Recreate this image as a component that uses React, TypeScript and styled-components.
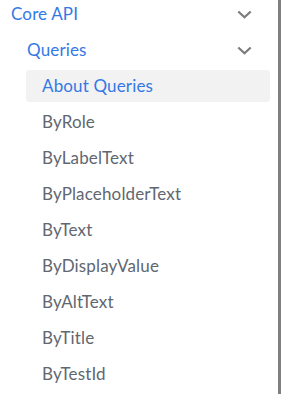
import React from "react";
import styled, { createGlobalStyle } from "styled-components";

interface MenuItem {
  label: string;
  active?: boolean;
  items?: MenuItem[];
}

const menu: MenuItem[] = [
  {
    label: "Core API",
    items: [
      {
        label: "Queries",
        items: [
          { label: "About Queries", active: true },
          { label: "ByRole" },
          { label: "ByLabelText" },
          { label: "ByPlaceholderText" },
          { label: "ByText" },
          { label: "ByDisplayValue" },
          { label: "ByAltText" },
          { label: "ByTitle" },
          { label: "ByTestId" },
        ],
      },
    ],
  },
];

const GlobalStyle = createGlobalStyle`
  html, body {
    margin: 0;
    padding: 0;
    background: #ffffff;
    overflow: hidden;
  }
  body {
    font-family: Lato, "Liberation Sans", sans-serif;
    -webkit-font-smoothing: antialiased;
  }
`;

const Chevron = () => (
  <svg width="15" height="9" viewBox="0 0 15 9" fill="none">
    <polyline points="1.3,1.5 7.5,7.2 13.7,1.5" stroke="#7b7b7b" strokeWidth="2.2" />
  </svg>
);

const MenuTree = ({ items, level }: { items: MenuItem[]; level: number }) => (
  <List $level={level}>
    {items.map((item) => (
      <li key={item.label}>
        <Row $level={level} $active={!!item.active} $category={!!item.items}>
          <span>{item.label}</span>
          {item.items ? <Chevron /> : null}
        </Row>
        {item.items ? <MenuTree items={item.items} level={level + 1} /> : null}
      </li>
    ))}
  </List>
);

const App = () => (
  <>
    <GlobalStyle />
    <Sidebar>
      <MenuTree items={menu} level={0} />
    </Sidebar>
  </>
);

const Sidebar = styled.nav`
  width: 278px;
  height: 100vh;
  border-right: 3px solid #7f7f7f;
  box-sizing: content-box;
  overflow: hidden;
`;

const List = styled.ul<{ $level: number }>`
  list-style: none;
  margin: ${(p) => (p.$level === 0 ? "-2px 0 0 0" : p.$level === 1 ? "4px 0 0 11px" : "4px 0 0 15px")};
  padding: 0;
  display: flex;
  flex-direction: column;
  gap: 4px;
`;

const Row = styled.div<{ $level: number; $active: boolean; $category: boolean }>`
  display: flex;
  align-items: center;
  justify-content: space-between;
  height: 32px;
  margin-right: 8px;
  padding: 0 18px 0 ${(p) => (p.$level === 0 ? 11 : 16)}px;
  border-radius: 4px;
  font-size: 17px;
  letter-spacing: 0.15px;
  line-height: 20px;
  color: ${(p) => (p.$category || p.$active ? "#3578e5" : "#606770")};
  background: ${(p) => (p.$active ? "#f2f2f2" : "transparent")};
  white-space: nowrap;
`;

export default App;
